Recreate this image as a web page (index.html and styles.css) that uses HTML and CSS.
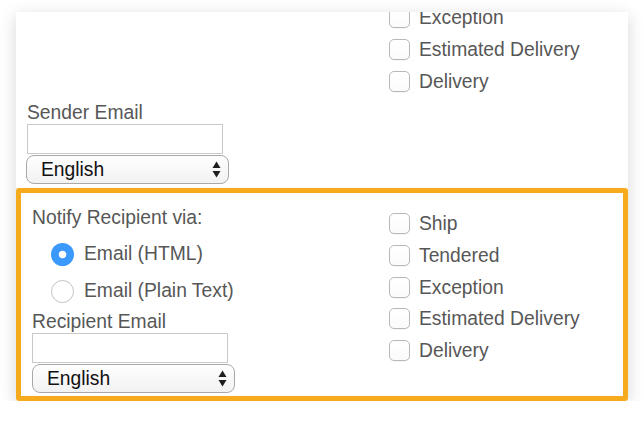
FILE: index.html
```html
<!DOCTYPE html>
<html lang="en">
<head>
<meta charset="utf-8">
<title>Notification settings</title>
<link rel="stylesheet" href="styles.css">
</head>
<body>
<div class="card">
  <section class="sec sec-top">
    <div class="col-left">
      <div class="field-label">Sender Email</div>
      <input class="text-input" type="text">
      <div class="select-wrap">
        <select class="lang-select"><option>English</option></select>
        <svg class="arrows" width="9" height="17" viewBox="0 0 9 17"><polygon points="0.5,7 4.5,0.5 8.5,7"/><polygon points="0.5,10 4.5,16.5 8.5,10"/></svg>
      </div>
    </div>
    <ul class="checks">
      <li><label class="check-row"><input class="cb" type="checkbox"><span>Exception</span></label></li>
      <li><label class="check-row"><input class="cb" type="checkbox"><span>Estimated Delivery</span></label></li>
      <li><label class="check-row"><input class="cb" type="checkbox"><span>Delivery</span></label></li>
    </ul>
  </section>
  <section class="sec sec-hl">
    <div class="col-left">
      <div class="field-label">Notify Recipient via:</div>
      <div class="radios">
        <label class="radio-row"><input class="rb" type="radio" name="fmt" checked><span>Email (HTML)</span></label>
        <label class="radio-row"><input class="rb" type="radio" name="fmt"><span>Email (Plain Text)</span></label>
      </div>
      <div class="field-label label-gap">Recipient Email</div>
      <input class="text-input" type="text">
      <div class="select-wrap">
        <select class="lang-select"><option>English</option></select>
        <svg class="arrows" width="9" height="17" viewBox="0 0 9 17"><polygon points="0.5,7 4.5,0.5 8.5,7"/><polygon points="0.5,10 4.5,16.5 8.5,10"/></svg>
      </div>
    </div>
    <ul class="checks checks-hl">
      <li><label class="check-row"><input class="cb" type="checkbox"><span>Ship</span></label></li>
      <li><label class="check-row"><input class="cb" type="checkbox"><span>Tendered</span></label></li>
      <li><label class="check-row"><input class="cb" type="checkbox"><span>Exception</span></label></li>
      <li><label class="check-row"><input class="cb" type="checkbox"><span>Estimated Delivery</span></label></li>
      <li><label class="check-row"><input class="cb" type="checkbox"><span>Delivery</span></label></li>
    </ul>
  </section>
</div>
</body>
</html>
```

FILE: styles.css
```css
* { box-sizing: border-box; }

html, body {
  margin: 0;
  padding: 0;
  background: #ffffff;
}

body {
  font-family: "Liberation Sans", Arial, sans-serif;
  font-size: 19.3px;
  color: #575757;
  padding: 12px 0 0 16px;
}

.card {
  width: 612px;
  height: 389px;
  background: #ffffff;
  overflow: hidden;
  box-shadow: 0 4px 16px rgba(0, 0, 0, 0.16);
}

.sec {
  display: grid;
}

.sec-top {
  margin-top: -5px;
  height: 181px;
  padding: 0 0 4px 11px;
  grid-template-columns: 362px 1fr;
}

.sec-top .col-left {
  align-self: end;
}

.sec-hl {
  height: 213px;
  border: 5px solid #f6ab1d;
  border-radius: 3px;
  padding: 14px 0 0 11px;
  grid-template-columns: 357px 1fr;
}

.col-left {
  display: flex;
  flex-direction: column;
  align-items: flex-start;
}

.field-label {
  line-height: 22px;
  height: 22px;
}

.label-gap {
  margin-top: 8px;
}

.text-input {
  display: block;
  width: 196px;
  height: 30px;
  margin: 0;
  padding: 0 4px;
  border: 1px solid #c9c9c9;
  border-radius: 0;
  background: #fff;
  font: inherit;
}

.select-wrap {
  position: relative;
  margin-top: 1px;
  width: 203px;
  height: 29px;
}

.lang-select {
  appearance: none;
  -webkit-appearance: none;
  display: block;
  width: 100%;
  height: 29px;
  margin: 0;
  padding: 0 0 0 14px;
  border: 1px solid #a9a9a9;
  border-radius: 8px;
  background: linear-gradient(#fefefe, #f2f2f2);
  font-family: "Liberation Sans", Arial, sans-serif;
  font-size: 19.3px;
  color: #111;
}

.arrows {
  position: absolute;
  right: 8px;
  top: 6px;
  fill: #1e1e1e;
  pointer-events: none;
}

.sec-top .select-wrap {
  margin-left: -1px;
}

.checks {
  list-style: none;
  margin: 0;
  padding: 0;
  display: flex;
  flex-direction: column;
  gap: 10.75px;
}

.checks-hl {
  padding-top: 6px;
}

.check-row {
  display: flex;
  align-items: center;
  gap: 9px;
  height: 21px;
  line-height: 21px;
}

.cb {
  appearance: none;
  -webkit-appearance: none;
  width: 21px;
  height: 21px;
  margin: 0;
  border: 1px solid #b8b8b8;
  border-radius: 5px;
  background: linear-gradient(#ffffff, #fbfbfb);
  box-shadow: 0 0.5px 0.5px rgba(0, 0, 0, 0.08);
  flex: none;
}

.radios {
  margin-top: 13px;
  padding-left: 19px;
  display: flex;
  flex-direction: column;
  gap: 13px;
}

.radio-row {
  display: flex;
  align-items: center;
  gap: 10px;
  height: 24px;
  line-height: 24px;
}

.rb {
  appearance: none;
  -webkit-appearance: none;
  width: 23px;
  height: 23px;
  margin: 0;
  border: 1px solid #c2c2c2;
  border-radius: 50%;
  background: #fff;
  flex: none;
}

.rb:checked {
  border: none;
  background: radial-gradient(circle, #ffffff 0 3.4px, #3b99fc 4.2px);
}
```
